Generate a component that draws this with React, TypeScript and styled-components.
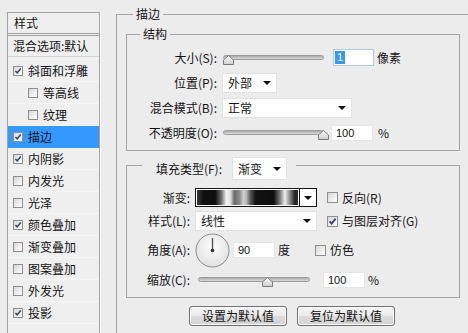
import React from "react";
import styled, { createGlobalStyle } from "styled-components";

const GlobalStyle = createGlobalStyle`
  html, body { margin: 0; padding: 0; background: #ececec; }
  body {
    font-family: "Noto Sans CJK SC", "Liberation Sans", sans-serif;
    font-size: 12px;
    color: #141414;
  }
  *, *::before, *::after { box-sizing: border-box; }
`;

const Dialog = styled.div`
  width: 468px;
  height: 333px;
  overflow: hidden;
  display: flex;
  align-items: flex-start;
  padding: 12px 0 0 7px;
  background: #ececec;
`;

/* ---------- left style list ---------- */
const StylePanel = styled.div`
  flex: none;
  width: 93px;
  height: 330px;
  border: 1px solid #a2a2a2;
  box-shadow: 1px 0 0 #fafafa;
  background: #efefef;
  display: flex;
  flex-direction: column;
`;

const PanelHeader = styled.div`
  height: 23px;
  line-height: 20px;
  padding-left: 6px;
  border-bottom: 3px double #a2a2a2;
`;

const BlendRow = styled.div`
  height: 21px;
  line-height: 20px;
  padding-left: 5px;
  border-bottom: 1px solid #d6d6d6;
  margin-bottom: 3px;
  white-space: nowrap;
`;

const LayerItem = styled.div<{ $indent?: boolean; $active?: boolean }>`
  height: 22px;
  display: flex;
  align-items: center;
  gap: 5px;
  line-height: 16px;
  padding-left: ${(p) => (p.$indent ? 20 : 5)}px;
  background: ${(p) => (p.$active ? "#3399ff" : "transparent")};
  border-bottom: 1px solid ${(p) => (p.$active ? "#3399ff" : "#f6f6f6")};
  white-space: nowrap;
`;

const CheckBox = styled.span<{ $size: number }>`
  flex: none;
  width: ${(p) => p.$size}px;
  height: ${(p) => p.$size}px;
  border: 1px solid #8e8e8e;
  background: linear-gradient(135deg, #d6d6d6 0%, #f2f2f2 65%, #fdfdfd 100%);
  display: inline-flex;
  align-items: center;
  justify-content: center;
`;

function Check({ checked, size = 11 }: { checked?: boolean; size?: number }) {
  const inner = size - 2;
  return (
    <CheckBox $size={size}>
      {checked && (
        <svg width={inner} height={inner} viewBox="0 0 9 9">
          <path d="M1.6 4.4 L3.6 6.6 L7.6 1.6" fill="none" stroke="#2f3f7c" strokeWidth="1.7" />
        </svg>
      )}
    </CheckBox>
  );
}

/* ---------- right stroke panel ---------- */
const StrokePanel = styled.fieldset`
  flex: none;
  margin: -5px 0 0 16px;
  padding: 0;
  width: 420px;
  min-height: 400px;
  border: 1px solid #a6a6a6;
`;

const PanelLegend = styled.legend<{ $ml: number }>`
  margin-left: ${(p) => p.$ml}px;
  padding: 0 3px;
  line-height: 14px;
  font-size: 12px;
`;

const Group = styled.fieldset<{ $mt: number; $pt: number; $pb: number }>`
  margin: ${(p) => p.$mt}px 0 0 9px;
  padding: ${(p) => p.$pt}px 0 ${(p) => p.$pb}px 0;
  width: 334px;
  border: 1px solid #a6a6a6;
`;

const FillLegend = styled.legend`
  margin-left: 15px;
  padding: 6px 9px 0 13px;
  display: flex;
  align-items: center;
  line-height: 16px;
`;

const Row = styled.div<{ $h: number }>`
  height: ${(p) => p.$h}px;
  display: flex;
  align-items: center;
  line-height: 16px;
  white-space: nowrap;
`;

const Label = styled.span<{ $w: number; $gap?: number }>`
  flex: none;
  width: ${(p) => p.$w}px;
  margin-right: ${(p) => p.$gap ?? 5}px;
  text-align: right;
  white-space: nowrap;
`;

const Select = styled.div<{ $w: number; $h: number; $ml?: number }>`
  flex: none;
  width: ${(p) => p.$w}px;
  height: ${(p) => p.$h}px;
  margin-left: ${(p) => p.$ml ?? 0}px;
  background: #fff;
  border: 1px solid #e2e2e2;
  display: flex;
  align-items: center;
  justify-content: space-between;
  padding: 0 5px 0 5px;
`;

const Caret = styled.span`
  flex: none;
  width: 0;
  height: 0;
  border-left: 4px solid transparent;
  border-right: 4px solid transparent;
  border-top: 4px solid #111;
`;

const NumField = styled.div<{ $w: number; $h: number; $ml: number; $focus?: boolean }>`
  flex: none;
  width: ${(p) => p.$w}px;
  height: ${(p) => p.$h}px;
  margin-left: ${(p) => p.$ml}px;
  background: #fff;
  border: 1px solid ${(p) => (p.$focus ? "#b4c8e6" : "#e6e6e6")};
  display: flex;
  align-items: center;
  padding-left: ${(p) => (p.$focus ? 1 : 4)}px;
  font-family: "Liberation Sans", "DejaVu Sans", sans-serif;
  font-size: 11px;
  color: #111;
`;

const Selected = styled.span`
  background: #3399ff;
  color: #fff;
  line-height: 13px;
  padding: 0 2px;
`;

const Unit = styled.span<{ $ml: number }>`
  flex: none;
  margin-left: ${(p) => p.$ml}px;
`;

const SliderBox = styled.div<{ $w: number; $ml?: number }>`
  position: relative;
  flex: none;
  width: ${(p) => p.$w}px;
  height: 12px;
  margin-left: ${(p) => p.$ml ?? 0}px;
`;

const Track = styled.div`
  margin-top: 3px;
  height: 5px;
  border: 1px solid #9d9d9d;
  border-radius: 3px;
  background: linear-gradient(#a9a9a9, #c9c9c9 60%, #d9d9d9);
`;

const Thumb = styled.svg`
  position: absolute;
  top: 3px;
  width: 11px;
  height: 10px;
`;

function Slider({ w, pct, ml }: { w: number; pct: number; ml?: number }) {
  return (
    <SliderBox $w={w} $ml={ml}>
      <Track />
      <Thumb viewBox="0 0 11 10" style={{ left: Math.round(pct * (w - 6)) }}>
        <defs>
          <linearGradient id={`thumbFill${w}`} x1="0" y1="0" x2="0" y2="1">
            <stop offset="0" stopColor="#fbfbfb" />
            <stop offset="1" stopColor="#cfcfcf" />
          </linearGradient>
        </defs>
        <polygon points="0.5,9.5 0.5,5 5.5,0.5 10.5,5 10.5,9.5" fill={`url(#thumbFill${w})`} stroke="#7b7b7b" />
      </Thumb>
    </SliderBox>
  );
}

const GradientPicker = styled.div`
  flex: none;
  width: 122px;
  height: 19px;
  display: flex;
  border: 1px solid #151515;
  background: #fff;
`;

const GradientSwatch = styled.div`
  flex: 1;
  border: 1px solid #fff;
  background: linear-gradient(
    90deg,
    #3a3a3a 0%,
    #111 6%,
    #0d0d0d 18%,
    #6a6a6a 24%,
    #f2f2f2 29%,
    #e0e0e0 33%,
    #6a6a6a 37%,
    #8a8a8a 42%,
    #cfcfcf 46%,
    #b5b5b5 49%,
    #555 53%,
    #141414 58%,
    #0d0d0d 76%,
    #777 82%,
    #eeeeee 87%,
    #888 92%,
    #222 97%,
    #333 100%
  );
`;

const PickerArrow = styled.div`
  flex: none;
  width: 17px;
  border-left: 1px solid #151515;
  display: flex;
  align-items: center;
  justify-content: center;
`;

const CheckOption = styled.label<{ $ml: number }>`
  flex: none;
  margin-left: ${(p) => p.$ml}px;
  display: flex;
  align-items: center;
  gap: 4px;
`;

const Dial = styled.svg`
  flex: none;
  width: 35px;
  height: 35px;
`;

const ButtonRow = styled.div`
  display: flex;
  gap: 10px;
  margin: 8px 0 0 72px;
`;

const Button = styled.button`
  width: 98px;
  height: 20px;
  padding: 0;
  font: inherit;
  font-size: 12px;
  line-height: 16px;
  color: #111;
  border: 1px solid #707070;
  border-radius: 3px;
  background: linear-gradient(#f4f4f4, #ebebeb 50%, #dddddd 50%, #d3d3d3);
  box-shadow: inset 0 0 0 1px #fbfbfb;
`;

const layers: { name: string; checked: boolean; indent?: boolean; active?: boolean }[] = [
  { name: "斜面和浮雕", checked: true },
  { name: "等高线", checked: false, indent: true },
  { name: "纹理", checked: false, indent: true },
  { name: "描边", checked: true, active: true },
  { name: "内阴影", checked: true },
  { name: "内发光", checked: false },
  { name: "光泽", checked: false },
  { name: "颜色叠加", checked: true },
  { name: "渐变叠加", checked: false },
  { name: "图案叠加", checked: false },
  { name: "外发光", checked: false },
  { name: "投影", checked: true },
];

export default function App() {
  return (
    <>
      <GlobalStyle />
      <Dialog>
        <StylePanel>
          <PanelHeader>样式</PanelHeader>
          <BlendRow>混合选项:默认</BlendRow>
          {layers.map((l) => (
            <LayerItem key={l.name} $indent={l.indent} $active={l.active}>
              <Check checked={l.checked} size={10} />
              <span>{l.name}</span>
            </LayerItem>
          ))}
        </StylePanel>

        <StrokePanel>
          <PanelLegend $ml={16}>描边</PanelLegend>

          <Group $mt={6} $pt={4} $pb={5}>
            <PanelLegend $ml={13}>结构</PanelLegend>
            <Row $h={25}>
              <Label $w={90}>大小(S):</Label>
              <Slider w={101} pct={0} ml={1} />
              <NumField $w={41} $h={17} $ml={9} $focus>
                <Selected>1</Selected>
              </NumField>
              <Unit $ml={3}>像素</Unit>
            </Row>
            <Row $h={25}>
              <Label $w={90}>位置(P):</Label>
              <Select $w={55} $h={20}>
                <span>外部</span>
                <Caret />
              </Select>
            </Row>
            <Row $h={25}>
              <Label $w={90}>混合模式(B):</Label>
              <Select $w={130} $h={20}>
                <span>正常</span>
                <Caret />
              </Select>
            </Row>
            <Row $h={25}>
              <Label $w={90}>不透明度(O):</Label>
              <Slider w={101} pct={1} ml={1} />
              <NumField $w={42} $h={16} $ml={7}>100</NumField>
              <Unit $ml={5}>%</Unit>
            </Row>
          </Group>

          <Group $mt={0} $pt={6} $pb={4}>
            <FillLegend>
              <Label $w={67} $gap={10}>填充类型(F):</Label>
              <Select $w={55} $h={23}>
                <span>渐变</span>
                <Caret />
              </Select>
            </FillLegend>
            <Row $h={23}>
              <Label $w={63}>渐变:</Label>
              <GradientPicker>
                <GradientSwatch />
                <PickerArrow>
                  <Caret />
                </PickerArrow>
              </GradientPicker>
              <CheckOption $ml={10}>
                <Check />
                <span>反向(R)</span>
              </CheckOption>
            </Row>
            <Row $h={24}>
              <Label $w={63}>样式(L):</Label>
              <Select $w={122} $h={20}>
                <span>线性</span>
                <Caret />
              </Select>
              <CheckOption $ml={10}>
                <Check checked />
                <span>与图层对齐(G)</span>
              </CheckOption>
            </Row>
            <Row $h={34}>
              <Label $w={63}>角度(A):</Label>
              <Dial viewBox="0 0 35 35">
                <defs>
                  <radialGradient id="dialFill" cx="50%" cy="40%" r="60%">
                    <stop offset="0" stopColor="#ffffff" />
                    <stop offset="1" stopColor="#e0e0e0" />
                  </radialGradient>
                </defs>
                <circle cx="17.5" cy="17.5" r="16.5" fill="url(#dialFill)" stroke="#8a8a8a" />
                <line x1="17.5" y1="17.5" x2="17.5" y2="5" stroke="#555" strokeWidth="1.4" />
                <circle cx="17.5" cy="17.5" r="1.8" fill="#333" />
              </Dial>
              <NumField $w={42} $h={16} $ml={3}>90</NumField>
              <Unit $ml={3}>度</Unit>
              <CheckOption $ml={25}>
                <Check />
                <span>仿色</span>
              </CheckOption>
            </Row>
            <Row $h={26}>
              <Label $w={63}>缩放(C):</Label>
              <Slider w={112} pct={0.6} ml={3} />
              <NumField $w={42} $h={16} $ml={13}>100</NumField>
              <Unit $ml={3}>%</Unit>
            </Row>
          </Group>

          <ButtonRow>
            <Button>设置为默认值</Button>
            <Button>复位为默认值</Button>
          </ButtonRow>
        </StrokePanel>
      </Dialog>
    </>
  );
}
